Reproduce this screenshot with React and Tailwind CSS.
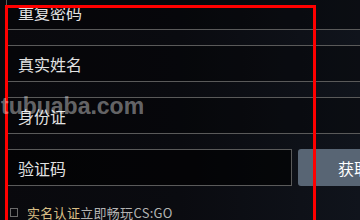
export default function App() {
  const font = { fontFamily: '"Microsoft YaHei", "Noto Sans CJK SC", "Noto Sans", sans-serif' };
  const Field = ({ label }) => (
    <div className="h-[37px] w-[420px] shrink-0 border border-[#5a5a5a] bg-black/30 flex items-center pl-[11px] text-[16px] text-[#e2e2e2]">
      {label}
    </div>
  );
  return (
    <div
      className="relative w-[360px] h-[220px] overflow-hidden bg-gradient-to-r from-[#09090d] via-[#0a0b10] to-[#10141c]"
      style={font}
    >
      <div className="flex flex-col mt-[-7px] ml-[6px]">
        <div className="flex flex-col gap-[15px]">
          <Field label="重复密码" />
          <Field label="真实姓名" />
          <Field label="身份证" />
          <div className="flex h-[37px] gap-[6px]">
            <div className="w-[286px] shrink-0 h-full border border-[#5a5a5a] bg-black/60 flex items-center pl-[11px] text-[16px] text-[#e2e2e2]">
              验证码
            </div>
            <div className="w-[110px] shrink-0 h-full rounded-[3px] bg-[#586574] flex items-center pl-[40px] text-[16px] text-white whitespace-nowrap">
              获取验证码
            </div>
          </div>
        </div>
        <div className="flex items-center h-[20px] mt-[16px] ml-[4px] gap-[9px] text-[13px] leading-none">
          <div className="w-[8px] h-[9px] border border-[#6a6a6a]" />
          <div className="whitespace-nowrap tracking-[0.3px]">
            <span className="text-[#d8bf86]">实名认证</span>
            <span className="text-[#b3b3b3]">立即畅玩CS:GO</span>
          </div>
        </div>
      </div>
      <div className="absolute left-[5px] top-[5px] w-[311px] h-[260px] border-[3px] border-[#ff0000] pointer-events-none" />
      <div
        className="absolute left-[1px] top-[95px] text-[23px] leading-[22px] font-bold text-white/40 pointer-events-none"
        style={{ fontFamily: '"Liberation Sans", Arial, sans-serif' }}
      >
        tubuaba.com
      </div>
    </div>
  );
}
